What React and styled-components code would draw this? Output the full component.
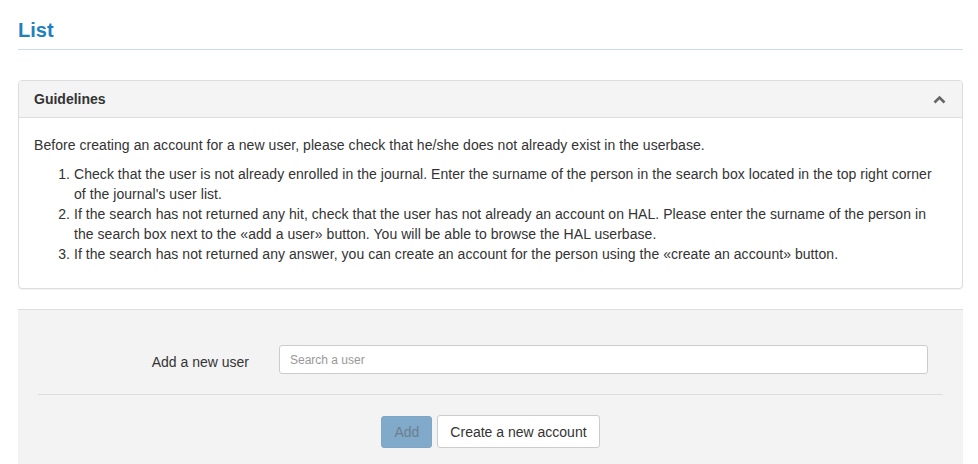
import styled, { createGlobalStyle } from "styled-components";

const GlobalStyle = createGlobalStyle`
  body {
    margin: 0;
    background: #fff;
    font-family: "Liberation Sans", Arial, Helvetica, sans-serif;
    color: #333;
  }
`;

const steps = [
  "Check that the user is not already enrolled in the journal. Enter the surname of the person in the search box located in the top right corner of the journal's user list.",
  "If the search has not returned any hit, check that the user has not already an account on HAL. Please enter the surname of the person in the search box next to the «add a user» button. You will be able to browse the HAL userbase.",
  "If the search has not returned any answer, you can create an account for the person using the «create an account» button.",
];

const App = () => {
  return (
    <Page>
      <GlobalStyle />
      <Title>List</Title>
      <Panel>
        <PanelHeading>
          <span>Guidelines</span>
          <svg width="13" height="9" viewBox="0 0 13 9">
            <path d="M1.5 7.5 L6.5 2.5 L11.5 7.5" fill="none" stroke="#666" strokeWidth="2.6" />
          </svg>
        </PanelHeading>
        <PanelBody>
          <p>
            Before creating an account for a new user, please check that he/she does not already
            exist in the userbase.
          </p>
          <Steps>
            {steps.map((s, i) => (
              <li key={i}>{s}</li>
            ))}
          </Steps>
        </PanelBody>
      </Panel>
      <Well>
        <FormRow>
          <Label htmlFor="search">Add a new user</Label>
          <Input id="search" placeholder="Search a user" />
        </FormRow>
        <Divider />
        <Actions>
          <Button primary disabled>
            Add
          </Button>
          <Button>Create a new account</Button>
        </Actions>
      </Well>
    </Page>
  );
};

const Page = styled.div`
  padding: 0 15px 0 18px;
  width: 945px;
`;

const Title = styled.h1`
  margin: 0;
  padding: 19px 0 7px;
  font-size: 20px;
  line-height: 23px;
  font-weight: bold;
  color: #1f80bf;
  border-bottom: 1px solid #c9dde6;
`;

const Panel = styled.div`
  margin-top: 30px;
  border: 1px solid #ddd;
  border-radius: 4px;
  background: #fff;
  box-shadow: 0 1px 1px rgba(0, 0, 0, 0.05);
`;

const PanelHeading = styled.div`
  display: flex;
  justify-content: space-between;
  align-items: center;
  padding: 0 15px 0 15px;
  height: 36px;
  background: #f4f4f4;
  border-bottom: 1px solid #ddd;
  border-radius: 3px 3px 0 0;
  font-size: 14px;
  font-weight: bold;
  color: #333;

  svg {
    margin-right: 1px;
  }
`;

const PanelBody = styled.div`
  padding: 17px 15px 14px;
  font-size: 14px;
  line-height: 20px;
  letter-spacing: 0.05px;
  color: #333;

  p {
    margin: 0 0 9px;
  }
`;

const Steps = styled.ol`
  margin: 0 0 10px;
  padding-left: 40px;
`;

const Well = styled.div`
  margin-top: 20px;
  padding: 35px 20px 20px;
  background: #f3f3f3;
  border-top: 1px solid #ddd;
`;

const FormRow = styled.div`
  display: flex;
  align-items: center;
`;

const Label = styled.label`
  width: 211px;
  text-align: right;
  font-size: 14px;
  color: #333;
  padding-top: 4px;
`;

const Input = styled.input`
  margin-left: 30px;
  width: 649px;
  height: 29px;
  box-sizing: border-box;
  padding: 0 10px;
  border: 1px solid #ccc;
  border-radius: 3px;
  background: #fff;
  font-family: inherit;
  font-size: 12px;
  color: #555;

  &::placeholder {
    color: #999;
  }
`;

const Divider = styled.hr`
  margin: 20px 0 20px;
  border: 0;
  border-top: 1px solid #ddd;
`;

const Actions = styled.div`
  display: flex;
  justify-content: center;
  gap: 5px;
`;

const Button = styled.button`
  height: ${(p) => (p.primary ? "32px" : "33px")};
  margin-top: ${(p) => (p.primary ? "1px" : "0")};
  padding: 0 12px;
  font-family: inherit;
  font-size: 14px;
  border-radius: 3px;
  border: 1px solid ${(p) => (p.primary ? "#7ea6c8" : "#ccc")};
  background: ${(p) => (p.primary ? "#80a9ca" : "#fff")};
  color: ${(p) => (p.primary ? "#6d7f8d" : "#333")};
  cursor: ${(p) => (p.disabled ? "not-allowed" : "pointer")};
`;

export default App;
